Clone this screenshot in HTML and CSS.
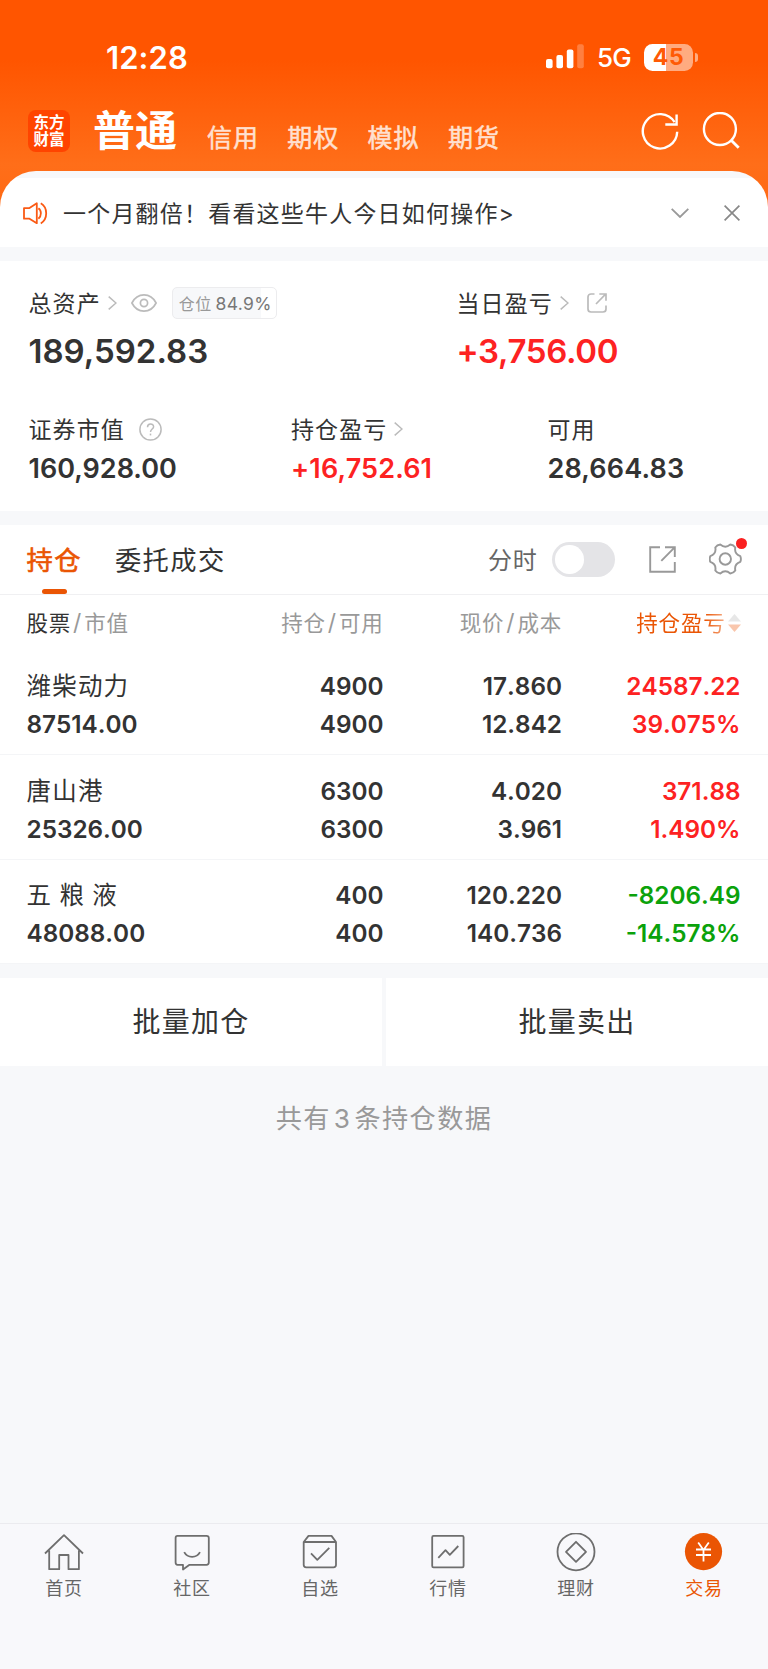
FILE: index.html
```html
<!DOCTYPE html>
<html lang="zh-CN">
<head>
<meta charset="utf-8">
<title>交易</title>
<link rel="stylesheet" href="styles.css">
</head>
<body>
<div class="app">
  <header class="hero">
    <div class="status">
      <span class="time">12:28</span>
      <div class="status-right">
        <svg class="signal" width="38" height="25" viewBox="0 0 38 25" fill="#fff"><rect x="0" y="15" width="6.6" height="9.3" rx="2"/><rect x="10.4" y="11" width="6.6" height="13.3" rx="2"/><rect x="20.8" y="5.5" width="6.6" height="18.8" rx="2"/><rect x="31.2" y="0.3" width="6.6" height="24" rx="2" opacity=".25"/></svg>
        <span class="net">5G</span>
        <span class="battery"><span class="level">45</span></span><i class="nub"></i>
      </div>
    </div>
    <nav class="nav">
      <div class="logo"><span>东方</span><span>财富</span></div>
      <b class="nav-main">普通</b>
      <span class="nav-item">信用</span><span class="nav-item">期权</span><span class="nav-item">模拟</span><span class="nav-item">期货</span>
      <div class="nav-icons">
        <svg width="38" height="38" viewBox="0 0 38 38" fill="none" stroke="#fff" stroke-width="2.4"><path d="M36.2 19.8A17.2 17.2 0 1 1 33.6 10.2"/><path d="M35.6 2.5V12.5H24.3"/></svg>
        <svg width="38" height="38" viewBox="0 0 38 38" fill="none" stroke="#fff" stroke-width="2.4"><circle cx="17.9" cy="17" r="16"/><path d="M29.2 28.2L36.7 35.7" stroke-width="2.8"/></svg>
      </div>
    </nav>
    <div class="notice">
      <svg width="25" height="23" viewBox="0 0 25 23" fill="none" stroke="#fa5a14" stroke-width="1.8" stroke-linejoin="round"><path d="M1 6.1H6.5L13.8 1.3V21.2L6.5 16.7H1Z"/><path d="M15.4 6.2C18.7 8.5 18.7 14 15.4 16.8"/><path d="M17.8 1.2C25 5.5 25 17 17.8 21.4"/></svg>
      <span class="notice-text">一个月翻倍！看看这些牛人今日如何操作&gt;</span>
      <svg class="chev" width="18" height="10" viewBox="0 0 18 10" fill="none" stroke="#999" stroke-width="1.8"><path d="M.7 .8L9 9L17.3 .8"/></svg>
      <svg class="close" width="16" height="16" viewBox="0 0 16 16" fill="none" stroke="#888" stroke-width="1.7"><path d="M.6 .6L15.4 15.4M15.4 .6L.6 15.4"/></svg>
    </div>
  </header>

  <section class="assets">
    <div class="row row-top">
      <div class="cell">
        <div class="label">总资产
          <svg class="arr" width="9" height="14" viewBox="0 0 9 14"><path d="M.7 .6L8 7L.7 13.4"/></svg>
          <svg class="eye" width="26" height="18" viewBox="0 0 26 18" fill="none" stroke="#bbb" stroke-width="1.7"><path d="M.9 9C3.6 3.7 8 .9 13 .9S22.4 3.7 25.1 9C22.4 14.3 18 17.1 13 17.1S3.6 14.3 .9 9Z"/><circle cx="13" cy="9" r="3.6"/></svg>
          <span class="tag">仓位 <em>84.9%</em></span>
        </div>
        <div class="big total">189,592.83</div>
      </div>
      <div class="cell">
        <div class="label">当日盈亏
          <svg class="arr" width="9" height="14" viewBox="0 0 9 14"><path d="M.7 .6L8 7L.7 13.4"/></svg>
          <svg class="share" width="20" height="20" viewBox="0 0 20 20" fill="none" stroke="#bbb" stroke-width="1.7"><path d="M7.5 1H4A3 3 0 0 0 1 4V16A3 3 0 0 0 4 19H16A3 3 0 0 0 19 16V12.5"/><path d="M9 11L18.6 1.2M12.3 1H19V7.7"/></svg>
        </div>
        <div class="big red day">+3,756.00</div>
      </div>
    </div>
    <div class="row row-sub">
      <div class="cell"><div class="label">证券市值
          <svg class="help" width="23" height="23" viewBox="0 0 23 23" fill="none" stroke="#bbb" stroke-width="1.5"><circle cx="11.5" cy="11.5" r="10.6"/><path d="M8.5 9.2C8.5 5 14.6 5 14.6 8.8C14.6 11 11.5 11.2 11.5 14"/><path d="M11.5 15.6V17.4"/></svg></div>
        <div class="mid">160,928.00</div></div>
      <div class="cell"><div class="label">持仓盈亏
          <svg class="arr" width="9" height="14" viewBox="0 0 9 14"><path d="M.7 .6L8 7L.7 13.4"/></svg></div>
        <div class="mid red hold">+16,752.61</div></div>
      <div class="cell"><div class="label">可用</div><div class="mid avail">28,664.83</div></div>
    </div>
  </section>

  <section class="positions">
    <div class="tabs">
      <span class="tab active">持仓</span>
      <span class="tab">委托成交</span>
      <div class="tools">
        <span class="fs">分时</span>
        <span class="switch"></span>
        <svg class="export" width="27" height="27" viewBox="0 0 27 27" fill="none" stroke="#999" stroke-width="1.9"><path d="M11 1.2H1.2V25.8H25.8V16"/><path d="M12.3 14.8L25.4 1.6M16 1.2H25.8V11"/></svg>
        <span class="gear">
          <svg width="33" height="32" viewBox="0 0 32.4 32" fill="none" stroke="#999" stroke-width="1.9" stroke-linejoin="round"><path d="M31 18.9Q24.75 21.05 26 27.5Q24.2 30.2 21 30.5Q16 26.1 11 30.5Q7.8 30.2 6 27.5Q7.25 21.05 1 18.9Q-.2 16 1 13.1Q7.25 10.95 6 4.5Q7.8 1.8 11 1.5Q16 5.9 21 1.5Q24.2 1.8 26 4.5Q24.75 10.95 31 13.1Q32.2 16 31 18.9Z"/><circle cx="16" cy="16" r="5.7"/></svg>
          <i class="dot"></i>
        </span>
      </div>
    </div>
    <div class="grid thead">
      <span class="name-h"><b>股票</b><s>/</s>市值</span>
      <span>持仓<s>/</s>可用</span>
      <span>现价<s>/</s>成本</span>
      <span class="sort">持仓盈亏<svg width="13" height="18" viewBox="0 0 13 18"><path d="M0 7.5L6.5 0L13 7.5Z" fill="#c4c4c4"/><path d="M0 10.5H13L6.5 18Z" fill="#f07030"/></svg></span>
    </div>
    <div class="grid item"><div><p class="stock">潍柴动力</p><p>87514.00</p></div><div><p>4900</p><p>4900</p></div><div><p>17.860</p><p>12.842</p></div><div class="red"><p>24587.22</p><p>39.075%</p></div></div>
    <div class="grid item"><div><p class="stock">唐山港</p><p>25326.00</p></div><div><p>6300</p><p>6300</p></div><div><p>4.020</p><p>3.961</p></div><div class="red"><p>371.88</p><p>1.490%</p></div></div>
    <div class="grid item"><div><p class="stock spaced">五 粮 液</p><p>48088.00</p></div><div><p>400</p><p>400</p></div><div><p>120.220</p><p>140.736</p></div><div class="green"><p>-8206.49</p><p>-14.578%</p></div></div>
  </section>

  <div class="batch"><span>批量加仓</span><span>批量卖出</span></div>
  <p class="count">共有<i>3</i>条持仓数据</p>

  <footer class="tabbar">
    <div class="tb"><svg width="40" height="40" viewBox="0 0 40 40"><path d="M1 20.5L20 2.2L39 20.5M5.2 17.5V36.2H15.2V22H24.5V36.2H34.9V17.5"/></svg>首页</div>
    <div class="tb"><svg width="40" height="40" viewBox="0 0 40 40"><path d="M5.5 2.8H34.5Q36.8 2.8 36.8 5V29.6Q36.8 31.8 34.5 31.8H17.5L11 36.5V31.8H5.5Q3.6 31.8 3.6 29.6V5Q3.6 2.8 5.5 2.8Z"/><path d="M12.2 19.2C15.5 25.4 24.7 25.4 28 19.2"/></svg>社区</div>
    <div class="tb"><svg width="40" height="40" viewBox="0 0 40 40"><path d="M3.7 9L8.5 2.9H31.5L36 9V31.8Q36 34.3 33.5 34.3H6.2Q3.7 34.3 3.7 31.8ZM3.7 9H36"/><path d="M11 20.3L17.3 26.8L29.3 14.8"/></svg>自选</div>
    <div class="tb"><svg width="40" height="40" viewBox="0 0 40 40"><rect x="4.2" y="2.9" width="31.4" height="31.4" rx="1.3"/><path d="M10.3 24.8L17.5 17.2L21.8 21.8L30.3 13"/></svg>行情</div>
    <div class="tb"><svg width="40" height="40" viewBox="0 0 40 40"><circle cx="20" cy="18.8" r="18.5"/><path d="M20 8.8L30 18.8L20 28.8L10 18.8Z"/></svg>理财</div>
    <div class="tb on"><svg width="40" height="40" viewBox="0 0 40 40"><circle class="coin" cx="19.5" cy="18.6" r="18.6"/><path class="yen" d="M14.2 9.5L19.5 17L24.8 9.5M12 16.5H27M12 22H27M19.5 17V28.5"/></svg>交易</div>
  </footer>
</div>
</body>
</html>
```
FILE: styles.css
```css
* { box-sizing: border-box; }
body { margin: 0; font-family: Inter, "Noto Sans CJK SC", sans-serif; color: #333; background: #f7f8fa; }
p { margin: 0; }
svg { display: block; flex: none; }
i, em { font-style: normal; }
s { text-decoration: none; }
.app { width: 768px; height: 1669px; display: flex; flex-direction: column; overflow: hidden; }
.red { color: #fd2222; }
.green { color: #0ba20b; }

.hero { height: 247px; display: flex; flex-direction: column; background: linear-gradient(#ff5500 0, #ff5500 60px, #ff6e19 165px, #ff6a14 200px); color: #fff; }
.status { height: 96px; padding: 18px 70px 0 106px; display: flex; align-items: center; justify-content: space-between; }
.time { font-size: 31px; font-weight: 600; letter-spacing: .1px; }
.status-right { display: flex; align-items: center; }
.net { font-size: 26px; font-weight: 500; margin: 0 12px 0 13px; width: 35px; letter-spacing: -.9px; line-height: 30px; padding-top: 2px; }
.battery { width: 49px; height: 27px; border-radius: 8.5px; background: linear-gradient(90deg, #fff 45%, #ffab80 45%); display: flex; align-items: center; justify-content: center; color: #ff5a05; }
.level { font-size: 23px; font-weight: 700; line-height: 27px; letter-spacing: .6px; }
.nub { width: 3px; height: 9px; margin-left: 2px; border-radius: 0 3px 3px 0; background: #ffab80; }
.signal { margin-top: -1px; }

.nav { height: 75px; padding: 0 29px 0 28px; display: flex; align-items: flex-start; }
.logo { width: 42px; height: 42px; margin-top: 14px; border-radius: 8px; background: #ff4400; display: flex; flex-direction: column; align-items: center; justify-content: center; font-size: 15.5px; font-weight: 700; line-height: 17.3px; }
.nav-main { font-size: 42px; font-weight: 700; line-height: 50px; margin: 10px 27px 0 23px; width: 87px; white-space: nowrap; }
.nav-item { font-size: 25px; letter-spacing: 1px; line-height: 34px; margin-top: 25px; width: 80.3px; -webkit-text-stroke: .5px #ffe0d0; color: #ffe0d0; }
.nav-icons { margin-left: auto; display: flex; gap: 23px; margin-top: 16px; }
.nav-icons svg:last-child { margin-right: -1px; }

.notice { height: 76px; border-radius: 36px 36px 0 0; background: linear-gradient(#f7f8fa 7px, #fff 7px); display: flex; align-items: center; padding: 8px 28px 0 23px; color: #333; }
.notice-text { margin: 0 0 2px 15px; font-size: 23px; letter-spacing: 1.2px; }
.chev { margin-left: auto; }
.close { margin-left: 35px; }

.assets { margin-top: 14px; height: 250px; background: #fff; padding: 24px 28.5px 0; }
.row { display: grid; }
.row-top { grid-template-columns: 428px 1fr; height: 129px; }
.row-sub { grid-template-columns: 262.5px 256.5px 1fr; }
.label { height: 36px; display: flex; align-items: center; font-size: 23px; letter-spacing: 1.1px; padding-bottom: 2px; }
.label > * { margin-top: 2px; }
.arr { fill: none; stroke: #bbb; stroke-width: 1.5; margin-left: 7px; }
.eye { margin-left: 14px; }
.share { margin-left: 18px; }
.help { margin-left: 14px; }
.tag { margin-left: 15px; width: 105px; height: 32px; border: 1.5px solid #ececee; border-radius: 5px; background: linear-gradient(90deg, #f7f8fa 85%, #fff 85%); font-size: 16px; letter-spacing: .4px; color: #999; line-height: 31px; padding-left: 6px; white-space: nowrap; }
.tag em { color: #777; font-size: 17.5px; letter-spacing: .35px; margin-left: -1px; }
.big { font-size: 33px; font-weight: 600; line-height: 40px; margin-top: 10px; }
.day { letter-spacing: -.35px; }
.mid { font-size: 27px; font-weight: 600; line-height: 34px; margin-top: 8px; }
.hold, .avail { letter-spacing: .15px; }
.row-sub .label { height: 30px; }

.positions { margin-top: 14px; background: #fff; height: 439px; }
.tabs { height: 69.5px; border-bottom: 1.5px solid #f0f0f2; padding: 0 26.5px; display: flex; align-items: center; }
.tab { height: 69px; line-height: 72px; font-size: 26.3px; letter-spacing: 1.4px; margin-right: 33px; display: flex; flex-direction: column; align-items: center; }
.active { color: #ea5504; -webkit-text-stroke: .6px #ea5504; }
.active::after { content: ""; width: 25px; height: 5px; border-radius: 3px; background: #ea5504; margin-top: -8px; flex: none; }
.tools { margin-left: auto; display: flex; align-items: center; }
.fs { font-size: 24px; letter-spacing: .8px; color: #666; margin-bottom: 2px; }
.switch { width: 63px; height: 35.5px; border-radius: 18px; background: #e4e4e7; margin-left: 14px; padding: 3.5px; }
.switch::before { content: ""; display: block; width: 28.5px; height: 28.5px; border-radius: 50%; background: #fff; }
.export { margin-left: 34px; }
.gear { margin-left: 33px; position: relative; }
.dot { position: absolute; right: -5px; top: -5px; width: 11px; height: 11px; border-radius: 50%; background: #fa2020; }

.grid { display: grid; grid-template-columns: 180px 177px 178.5px 1fr; padding: 0 27.5px 0 26.5px; text-align: right; }
.grid > :first-child { text-align: left; }
.thead { height: 56px; line-height: 57px; font-size: 21.5px; letter-spacing: .8px; color: #999; white-space: nowrap; }
.thead b { color: #333; font-weight: 400; }
.thead s { margin: 0 2px; font-size: 23px; }
.sort { display: flex; align-items: center; justify-content: flex-end; gap: 2px; color: #ea5504; -webkit-mask-image: linear-gradient(90deg, #000 80%, rgba(0,0,0,.4) 93%); mask-image: linear-gradient(90deg, #000 80%, rgba(0,0,0,.4) 93%); }
.item { height: 104.5px; padding-top: 16.5px; font-size: 24.3px; font-weight: 600; line-height: 38px; font-kerning: none; border-bottom: 1.5px solid #f4f5f7; }
.item p { height: 38px; }
.item .stock { font-weight: 400; font-size: 24.5px; letter-spacing: 1.2px; }
.item .spaced { word-spacing: -.9px; }

.batch { margin-top: 14px; height: 88px; display: grid; grid-template-columns: 1fr 1fr; gap: 4px; }
.batch span { background: #fff; font-size: 28px; letter-spacing: 1.3px; text-align: center; line-height: 88px; }
.count { margin-top: 35px; text-align: center; font-size: 26.2px; letter-spacing: 1.4px; line-height: 36px; color: #999; }
.count i { margin: 0 3px; }

.tabbar { margin-top: auto; height: 146px; border-top: 1.5px solid #ebebef; background: #f8f8fb; display: grid; grid-template-columns: repeat(6, 1fr); padding-top: 8.5px; }
.tb { display: flex; flex-direction: column; align-items: center; font-size: 18px; letter-spacing: .8px; line-height: 26px; color: #666; }
.tb svg { fill: none; stroke: #6e6e6e; stroke-width: 1.8; stroke-linejoin: round; margin-bottom: 3px; }
.tb.on { color: #ea5504; }
.tb .coin { fill: #ea5504; stroke: none; }
.tb .yen { stroke: #fff; }
```
